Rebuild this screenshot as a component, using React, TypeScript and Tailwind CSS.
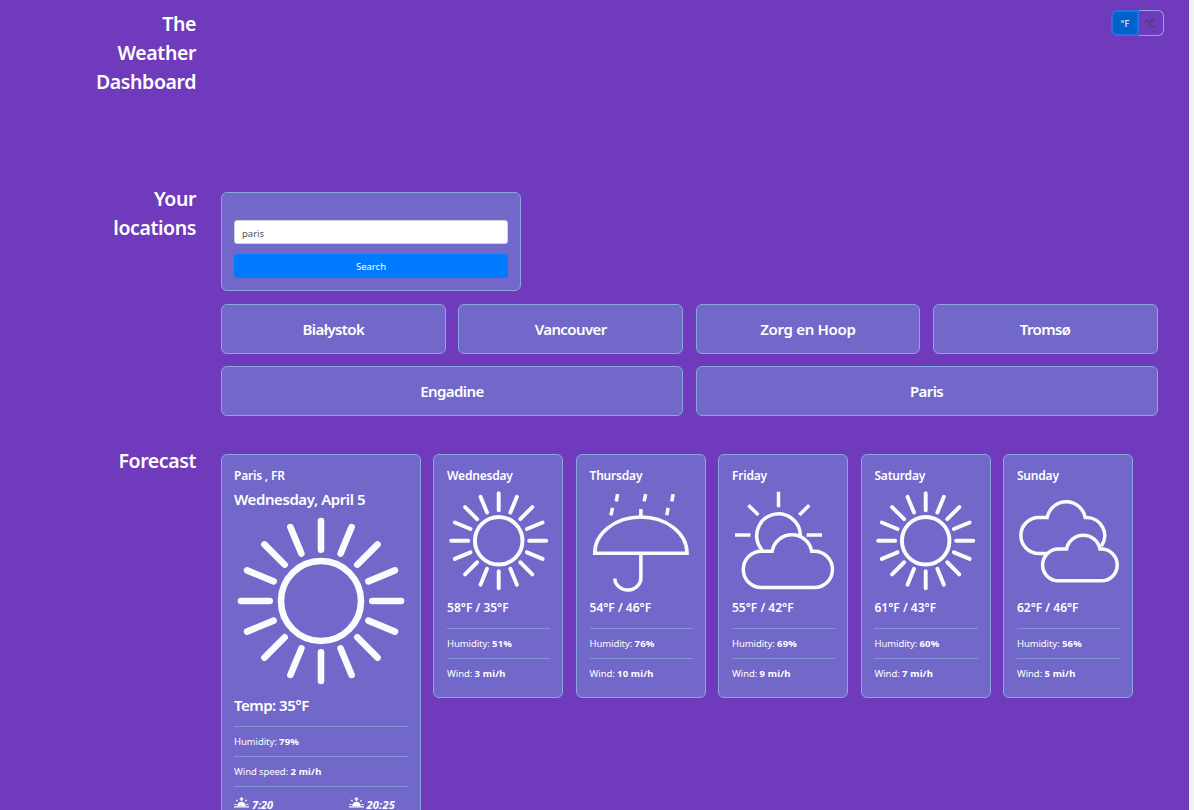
import React from "react";

const fmt = "font-semibold";

function Sun() {
  const rays = Array.from({ length: 16 }, (_, i) => i * 22.5);
  return (
    <svg viewBox="-87 -87 174 174" className="block w-full" fill="none" stroke="#fbfbfd" strokeWidth="6.6">
      <circle r="40" />
      {rays.map((a) => (
        <path key={a} d="M51.3 0H80" strokeLinecap="round" transform={`rotate(${a})`} />
      ))}
    </svg>
  );
}

function Umbrella() {
  return (
    <svg viewBox="0 0 309 309" className="block w-full" fill="none" stroke="#fbfbfd" strokeWidth="10.5">
      <path d="M14 192A138 108.5 0 0 1 290 192Z" />
      <path d="M152 60V84M152 192V264A39 36 0 0 1 74 268" />
      <path d="M82.500 15.500L78.500 37M67.500 56.500L62.500 78.500M166.500 15.500L161.500 37M248.500 15.500L244.500 37M233.500 56.500L229.500 78.500" />
    </svg>
  );
}

function PartlyCloudy() {
  return (
    <svg viewBox="0 0 309 309" className="block w-full" fill="none" stroke="#fbfbfd" strokeWidth="10.5">
      <path d="M90 182A65 65 0 1 1 204 141" />
      <path d="M139 8.500V54.500M9 137.500H55M223 137.500H269M49 48.500L79 77.500M231 48.500L201 77.500" />
      <path d="M88 294.500A54.250 54.250 0 0 1 88 186H120A60 60 0 0 1 238 186H246A54.250 54.250 0 0 1 246 294.500Z" />
    </svg>
  );
}

function Clouds() {
  return (
    <svg viewBox="0 0 309 309" className="block w-full" fill="none" stroke="#fbfbfd" strokeWidth="10.5">
      <path d="M92 192.500H65A53.500 53.500 0 0 1 65 85.500H90A58 58 0 0 1 204 85.500H206A54 54 0 0 1 252 171" />
      <path d="M124 274.500A47.500 47.500 0 0 1 124 179.500H148A51 51 0 0 1 248 179.500H252A47.500 47.500 0 0 1 252 274.500Z" />
    </svg>
  );
}

function Horizon() {
  return (
    <svg viewBox="0 0 15 12" className="h-3 w-[15px] shrink-0" fill="#fff">
      <path d="M7.500 0L10 2.500H8.200V4H6.800V2.500H5Z" />
      <path d="M3.200 9a4.300 4.300 0 0 1 8.600 0Z" />
      <path d="M2.300 3l1.300 1.300M12.700 3l-1.300 1.300M0.500 7.500h2M12.500 7.500h2M0 9.800H15" stroke="#fff" strokeWidth="1.2" />
    </svg>
  );
}

const card = "rounded-md border border-[#8ba5df] bg-[#7168ca]";

function Rule() {
  return <hr className="border-t border-[#8593d7]" />;
}

function Place({ name }: { name: string }) {
  return (
    <button className={`flex h-[50px] flex-1 items-center justify-center pt-px text-[15px] tracking-[-0.6px] ${fmt} ${card}`}>
      <span className={name === "Zorg en Hoop" ? "tracking-[-0.3px]" : ""}>{name}</span>
    </button>
  );
}

function Stat({ label, value }: { label: string; value: string }) {
  return (
    <p className="h-[29px] text-[9.500px] leading-[30px] tracking-[-0.08px]">
      {label}: <b className="tracking-[0.15px]">{value}</b>
    </p>
  );
}

const days = [
  { name: "Wednesday", art: <Sun />, temp: "58°F / 35°F", humidity: "51%", wind: "3 mi/h" },
  { name: "Thursday", art: <Umbrella />, temp: "54°F / 46°F", humidity: "76%", wind: "10 mi/h" },
  { name: "Friday", art: <PartlyCloudy />, temp: "55°F / 42°F", humidity: "69%", wind: "9 mi/h" },
  { name: "Saturday", art: <Sun />, temp: "61°F / 43°F", humidity: "60%", wind: "7 mi/h" },
  { name: "Sunday", art: <Clouds />, temp: "62°F / 46°F", humidity: "56%", wind: "5 mi/h" },
];

function Heading({ children }: { children: React.ReactNode }) {
  return (
    <h2 className="-mt-px w-[196px] shrink-0 pl-[90px] text-right text-[19.500px] leading-[29px] font-semibold tracking-[-0.4px]">
      {children}
    </h2>
  );
}

export default function App() {
  return (
    <div className="flex h-[810px] w-[1194px] overflow-hidden bg-[#f1f3f5] font-['Noto_Sans','Open_Sans',sans-serif] text-white">
      <div className="h-full w-[1189px] overflow-hidden bg-[#6f3abb]">
        <header className="flex h-[185px] items-start justify-between pt-[10px]">
          <Heading>The Weather Dashboard</Heading>
          <div className="mr-[25px] flex h-[26px] w-[53px] text-[9.500px]">
            <button className="w-[28px] rounded-l-md border-2 border-[#2a70dc] bg-[#0062cc] pt-[3px]">°F</button>
            <button className="flex-1 rounded-r-md border border-l-0 border-[#8ba5df] pr-[3px] pt-[3px] text-[#343a40]">°C</button>
          </div>
        </header>

        <section className="flex h-[262px] items-start gap-[25px]">
          <Heading>Your locations</Heading>
          <div className="w-[936.500px] pt-[7px]">
            <form className={`flex h-[99px] w-[300px] flex-col gap-[9px] px-3 pt-[27px] ${card}`}>
              <input
                defaultValue="paris"
                className="h-[24px] w-full rounded-[3px] border border-[#ced4da] bg-white px-[7px] pt-[3px] text-[9.500px] text-[#495057]"
              />
              <button type="button" className="mt-px h-[24px] rounded-[3px] bg-[#007bff] pt-0.5 text-[9.500px]">Search</button>
            </form>
            <div className="mt-[12.500px] flex gap-[12.500px]">
              <Place name="Białystok" />
              <Place name="Vancouver" />
              <Place name="Zorg en Hoop" />
              <Place name="Tromsø" />
            </div>
            <div className="mt-[12.500px] flex gap-[12.500px]">
              <Place name="Engadine" />
              <Place name="Paris" />
            </div>
          </div>
        </section>

        <section className="flex items-start gap-[25px]">
          <Heading>Forecast</Heading>
          <div className="flex items-start gap-[12.480px] pt-[6.500px]">
            <article className={`h-[400px] w-[200px] px-3 pt-[11.500px] ${card}`}>
              <h3 className={`text-[12px] leading-5 tracking-[-0.2px] ${fmt}`}>Paris , FR</h3>
              <h3 className={`h-7 pt-px text-[15px] leading-6 tracking-[-0.42px] ${fmt}`}>Wednesday, April 5</h3>
              <Sun />
              <p className={`h-[38px] pt-[5px] text-[15px] leading-6 tracking-[-0.5px] ${fmt}`}>Temp: 35°F</p>
              <Rule />
              <Stat label="Humidity" value="79%" />
              <Rule />
              <Stat label="Wind speed" value="2 mi/h" />
              <Rule />
              <div className="flex justify-between pt-[10px] pr-[13px] text-[11px] leading-4 font-bold italic tracking-[-0.1px]">
                <span className="flex gap-[3px]"><Horizon />7:20</span>
                <span className="flex gap-[3px]"><Horizon /><span className="tracking-[0.2px]">20:25</span></span>
              </div>
            </article>
            {days.map((d) => (
              <article key={d.name} className={`h-[244.400px] w-[130px] pt-[11.500px] pr-3 pl-[12.600px] ${card}`}>
                <h3 className={`h-[23px] text-[12px] leading-5 tracking-[-0.2px] ${fmt}`}>{d.name}</h3>
                {d.art}
                <p className={`h-[35.400px] pt-[6px] text-[12px] leading-5 ${fmt}`}>{d.temp}</p>
                <Rule />
                <Stat label="Humidity" value={d.humidity} />
                <Rule />
                <Stat label="Wind" value={d.wind} />
              </article>
            ))}
          </div>
        </section>
      </div>
    </div>
  );
}
